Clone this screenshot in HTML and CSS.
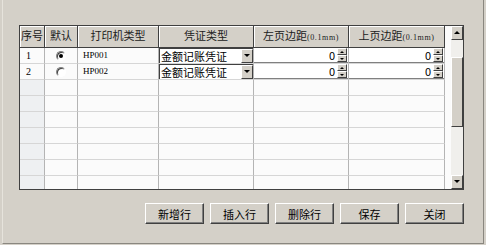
FILE: index.html
```html
<!DOCTYPE html>
<html lang="zh-CN">
<head>
  <meta charset="UTF-8" />
  <title>打印设置</title>
  <link rel="stylesheet" href="styles.css">
</head>
<body>
  <div class="window">
    <!-- grid -->
    <div class="grid">
      <div class="grid-body">
        <table class="sheet">
          <colgroup>
            <col class="c-no"><col class="c-def"><col class="c-prn"><col class="c-type"><col class="c-left"><col class="c-top">
          </colgroup>
          <thead>
            <tr>
              <th>序号</th>
              <th>默认</th>
              <th>打印机类型</th>
              <th>凭证类型</th>
              <th>左页边距<span class="unit">(0.1mm)</span></th>
              <th>上页边距<span class="unit">(0.1mm)</span></th>
            </tr>
          </thead>
          <tbody>
            <tr class="filled">
              <td class="no">1</td>
              <td class="center"><span class="radio checked"></span></td>
              <td class="code">HP001</td>
              <td class="edit"><div class="combo"><span class="combo-text">金额记账凭证</span><span class="drop"></span></div></td>
              <td class="edit"><div class="spin"><span class="spin-val">0</span><span class="spin-btns"><span class="up"></span><span class="down"></span></span></div></td>
              <td class="edit"><div class="spin"><span class="spin-val">0</span><span class="spin-btns"><span class="up"></span><span class="down"></span></span></div></td>
            </tr>
            <tr class="filled">
              <td class="no">2</td>
              <td class="center"><span class="radio"></span></td>
              <td class="code">HP002</td>
              <td class="edit"><div class="combo"><span class="combo-text">金额记账凭证</span><span class="drop"></span></div></td>
              <td class="edit"><div class="spin"><span class="spin-val">0</span><span class="spin-btns"><span class="up"></span><span class="down"></span></span></div></td>
              <td class="edit"><div class="spin"><span class="spin-val">0</span><span class="spin-btns"><span class="up"></span><span class="down"></span></span></div></td>
            </tr>
            <tr><td class="no"></td><td></td><td></td><td></td><td></td><td></td></tr>
            <tr><td class="no"></td><td></td><td></td><td></td><td></td><td></td></tr>
            <tr><td class="no"></td><td></td><td></td><td></td><td></td><td></td></tr>
            <tr><td class="no"></td><td></td><td></td><td></td><td></td><td></td></tr>
            <tr><td class="no"></td><td></td><td></td><td></td><td></td><td></td></tr>
            <tr><td class="no"></td><td></td><td></td><td></td><td></td><td></td></tr>
            <tr><td class="no"></td><td></td><td></td><td></td><td></td><td></td></tr>
            <tr><td class="no"></td><td></td><td></td><td></td><td></td><td></td></tr>
          </tbody>
        </table>
      </div>

      <!-- vertical scrollbar -->
      <div class="scrollbar">
        <div class="sb-btn"><span class="arrow-up"></span></div>
        <div class="sb-track short"></div>
        <div class="sb-thumb"></div>
        <div class="sb-track"></div>
        <div class="sb-btn"><span class="arrow-down"></span></div>
      </div>
    </div>

    <div class="actions">
      <button class="btn">新增行</button>
      <button class="btn">插入行</button>
      <button class="btn">删除行</button>
      <button class="btn">保存</button>
      <button class="btn">关闭</button>
    </div>
  </div>
</body>
</html>
```

FILE: styles.css
```css
body {
  margin: 0;
  background: #d4d0c8;
  font-family: "Noto Sans CJK SC", "Liberation Sans", sans-serif;
  font-size: 11px;
  color: #000;
}

.window {
  box-sizing: border-box;
  width: 482px;
  height: 244px;
  margin-left: 2px;
  padding: 25px 0 0 16px;
  border-left: 1px solid #e6e3dc;
  border-right: 1px solid #8a8780;
  border-bottom: 1px solid #8a8780;
}

.grid {
  box-sizing: border-box;
  width: 445px;
  height: 165px;
  border: 1px solid #404040;
  background: #fbfbfb;
  display: flex;
}

.grid-body {
  width: 431px;
  height: 163px;
  overflow: hidden;
}

.sheet {
  border-collapse: separate;
  border-spacing: 0;
  table-layout: fixed;
  width: 425px;
}

.c-no { width: 25px; }
.c-def { width: 33px; }
.c-prn { width: 81px; }
.c-type { width: 95px; }
.c-left { width: 95px; }
.c-top { width: 96px; }

.sheet th {
  height: 22px;
  padding: 0;
  background: #d4d0c8;
  font-weight: normal;
  color: #202020;
  border-right: 1px solid #404040;
  border-bottom: 1px solid #404040;
  box-shadow: inset 1px 1px 0 #fff;
  vertical-align: top;
  line-height: 14px;
  padding-top: 2px;
  box-sizing: border-box;
  white-space: nowrap;
  overflow: hidden;
}

.unit {
  font-family: "Liberation Serif", serif;
  font-size: 8px;
  letter-spacing: 0.6px;
}

.sheet td {
  height: 15px;
  padding: 0;
  border-right: 1px solid #b4b4b4;
  border-bottom: 1px solid #d6d6d6;
  line-height: 15px;
  white-space: nowrap;
  overflow: hidden;
}

.sheet td.no {
  background: #eef0f2;
  padding-left: 6px;
  font-family: "Liberation Serif", serif;
  font-size: 10px;
}

.filled td.no {
  background: #fbfbfb;
}

.center {
  text-align: center;
}

.code {
  padding-left: 5px !important;
  font-family: "Liberation Serif", serif;
  font-size: 9px;
}

.radio {
  display: inline-block;
  box-sizing: border-box;
  width: 10px;
  height: 10px;
  margin-top: 3px;
  vertical-align: top;
  border-radius: 50%;
  border: 1px solid;
  border-color: #808080 #fff #fff #808080;
  box-shadow: inset 1px 1px 0 #404040;
  background: #fff;
  position: relative;
}

.radio.checked::after {
  content: "";
  position: absolute;
  left: 2px;
  top: 2px;
  width: 4px;
  height: 4px;
  border-radius: 50%;
  background: #000;
}

.combo {
  display: flex;
  height: 15px;
  background: #fff;
  border-left: 1px solid #404040;
  border-top: 1px solid #404040;
  box-sizing: border-box;
}

.combo-text {
  flex: 1;
  padding-left: 1px;
  line-height: 14px;
}

.drop {
  box-sizing: border-box;
  width: 12px;
  height: 14px;
  background: #d4d0c8;
  border: 1px solid;
  border-color: #fff #404040 #404040 #fff;
  position: relative;
}

.drop::after {
  content: "";
  position: absolute;
  left: 2px;
  top: 4px;
  border-left: 3px solid transparent;
  border-right: 3px solid transparent;
  border-top: 3px solid #000;
}

.spin {
  display: flex;
  height: 15px;
  background: #fff;
  border-bottom: 1px solid #808080;
  box-sizing: border-box;
}

.spin-val {
  flex: 1;
  text-align: right;
  padding-right: 2px;
  line-height: 14px;
}

.spin-btns {
  width: 10px;
  display: flex;
  flex-direction: column;
  margin-right: 1px;
}

.spin-btns span {
  flex: 1;
  box-sizing: border-box;
  background: #d4d0c8;
  border: 1px solid;
  border-color: #fff #404040 #404040 #fff;
  position: relative;
}

.spin-btns .up::after,
.spin-btns .down::after {
  content: "";
  position: absolute;
  left: 2px;
  top: 2px;
  border-left: 2px solid transparent;
  border-right: 2px solid transparent;
}

.spin-btns .up::after { border-bottom: 2px solid #000; }
.spin-btns .down::after { border-top: 2px solid #000; }

.scrollbar {
  width: 12px;
  margin-left: auto;
  display: flex;
  flex-direction: column;
  background: #eeedea;
}

.sb-btn,
.sb-thumb {
  box-sizing: border-box;
  background: #d4d0c8;
  border: 1px solid;
  border-color: #fff #404040 #404040 #fff;
  position: relative;
}

.sb-btn {
  height: 14px;
}

.sb-track {
  flex: 1;
  background: #f0efec;
}

.sb-track.short {
  flex: 0 0 17px;
}

.sb-thumb {
  height: 70px;
}

.arrow-up,
.arrow-down {
  position: absolute;
  left: 2px;
  top: 4px;
  border-left: 3px solid transparent;
  border-right: 3px solid transparent;
}

.arrow-up { border-bottom: 3px solid #000; }
.arrow-down { border-top: 3px solid #000; }

.actions {
  display: flex;
  justify-content: flex-end;
  gap: 6px;
  width: 445px;
  margin-top: 13px;
}

.btn {
  box-sizing: border-box;
  width: 59px;
  height: 21px;
  padding: 0;
  font-family: "Noto Sans CJK SC", sans-serif;
  font-size: 11px;
  color: #000;
  background: #d4d0c8;
  border: 1px solid;
  border-color: #fff #404040 #404040 #fff;
  box-shadow: inset -1px -1px 0 #808080;
}
```
